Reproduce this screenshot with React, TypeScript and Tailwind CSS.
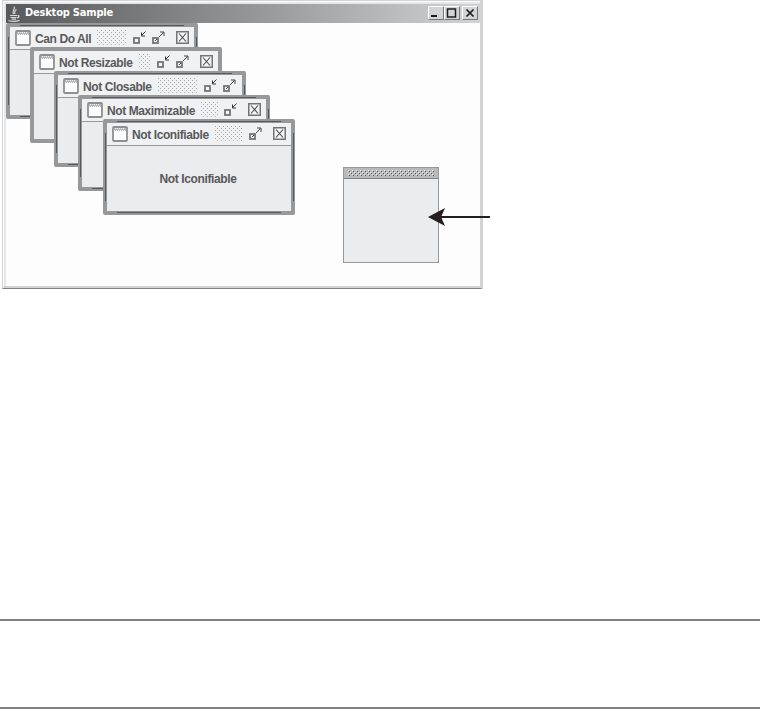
import type { ReactNode } from "react";

const font = "font-['Liberation_Sans',Arial,sans-serif]";

type Frame = {
  title: string;
  resizable?: boolean;
  closable?: boolean;
  maximizable?: boolean;
  iconifiable?: boolean;
};

const frames: Frame[] = [
  { title: "Can Do All", resizable: true, closable: true, maximizable: true, iconifiable: true },
  { title: "Not Resizable", closable: true, maximizable: true, iconifiable: true },
  { title: "Not Closable", resizable: true, maximizable: true, iconifiable: true },
  { title: "Not Maximizable", resizable: true, closable: true, iconifiable: true },
  { title: "Not Iconifiable", resizable: true, closable: true, maximizable: true },
];

const JavaCup = () => (
  <svg width="16" height="16" viewBox="0 0 16 16" fill="none" stroke="#d8d8d8" strokeWidth="1.200">
    <path d="M8 0.5C10 3 5.500 4 7.500 8M10.500 3.500C7.500 5 9.500 6 8.500 8" />
    <path d="M4 9.500h7M4.500 11.500h6M5.500 13.200h4.500M11.500 9.500c2.500 0 1.500 2-0.500 2.500" />
    <path d="M2.500 14.500c3 1 8 1 11-0.300" />
  </svg>
);

const FrameIcon = () => (
  <svg width="16" height="16" viewBox="0 0 16 16" className="shrink-0">
    <rect x="1" y="1" width="14" height="14" rx="1" fill="#fdfdfd" stroke="#8e8f92" strokeWidth="1.800" />
    <rect x="2" y="2" width="12" height="3" fill="#b5b6b8" />
    <path d="M3 2.500h10M2 4.500h11" stroke="#f4f4f4" strokeDasharray="1 1" />
  </svg>
);

const IconifyIcon = () => (
  <svg width="14" height="14" viewBox="0 0 14 14" className="shrink-0">
    <rect x="1" y="7" width="5" height="5" fill="#f4f4f4" stroke="#737477" strokeWidth="1.800" />
    <path d="M12.500 0.500L9 4M8.500 1.500v3.500h3.500" fill="none" stroke="#333" />
  </svg>
);

const MaximizeIcon = () => (
  <svg width="14" height="14" viewBox="0 0 14 14" className="shrink-0">
    <rect x="1" y="7" width="5" height="5" fill="#f4f4f4" stroke="#737477" strokeWidth="1.800" />
    <path d="M3 10L5 8M7 6L11.500 1.500M8 1h4v4" fill="none" stroke="#444" />
  </svg>
);

const CloseIcon = () => (
  <svg width="13" height="13" viewBox="0 0 13 13" className="shrink-0">
    <rect x="0.750" y="0.750" width="11.500" height="11.500" fill="#f4f4f4" stroke="#737477" strokeWidth="1.500" />
    <path d="M3 2.500l7 8M10 2.500l-7 8" stroke="#4a4a4c" strokeWidth="1.100" />
  </svg>
);

const Bumps = () => (
  <svg className="mx-1.5 h-4 w-0 flex-1">
    <defs>
      <pattern id="titleBumps" width="4" height="4" patternUnits="userSpaceOnUse">
        <path d="M0 0h1v1h-1zM2 2h1v1h-1z" fill="#a6a7a9" />
      </pattern>
    </defs>
    <rect width="100%" height="100%" fill="url(#titleBumps)" />
  </svg>
);

const InternalFrame = ({ frame, index }: { frame: Frame; index: number }) => (
  <div
    className="absolute w-48 h-24 rounded-[2px] bg-[#97989a] p-1"
    style={{ left: index * 24 + (index === 4 ? 1 : 0), top: index * 24 }}
  >
    {frame.resizable && (
      <>
        <div className="absolute left-3.5 right-3.5 top-0.5 h-px bg-[#58595b]" />
        <div className="absolute left-3.5 right-3.5 bottom-[2px] h-px bg-[#58595b]" />
        <div className="absolute top-3.5 bottom-3.5 left-0.5 w-px bg-[#58595b]" />
        <div className="absolute top-3.5 bottom-3.5 right-px w-px bg-[#58595b]" />
      </>
    )}
    <div className="flex h-full flex-col rounded-t-[2px] bg-[#ebecee]">
      <div className="flex h-[23px] items-center border-b border-[#97989a] bg-[#f0f1f2] pl-[5px] pr-[5px]">
        <FrameIcon />
        <span className="ml-1 whitespace-nowrap pt-px text-xs font-bold tracking-[-0.4px] text-[#58595b]">
          {frame.title}
        </span>
        <Bumps />
        <div className="flex items-center">
          {(frame.iconifiable || frame.maximizable) && (
            <div className="flex gap-[5px]">
              {frame.iconifiable && <IconifyIcon />}
              {frame.maximizable && <MaximizeIcon />}
            </div>
          )}
          {frame.closable && (
            <div className="ml-2.5 flex pb-0.5">
              <CloseIcon />
            </div>
          )}
        </div>
      </div>
      <div className="flex flex-1 items-center justify-center pr-0.5 text-xs font-bold tracking-[-0.38px] text-[#58595b]">
        {index === frames.length - 1 && frame.title}
      </div>
    </div>
  </div>
);

const WindowButton = ({ children }: { children: ReactNode }) => (
  <button className="h-[14px] w-4 border border-t-white border-l-white border-r-[#77787b] border-b-[#77787b] bg-[#d3d4d6]">
    <svg width="14" height="12" viewBox="0 0 14 12" fill="none" stroke="#1c1c1c">
      {children}
    </svg>
  </button>
);

const Palette = () => (
  <div className="absolute left-[337px] top-36 flex h-24 w-24 flex-col border border-[#97989a] bg-[#ebecee]">
    <div className="h-[11px] border-b border-[#808285] bg-[#b9babc] px-1 py-0.5">
      <svg width="86" height="6" className="block">
        <defs>
          <pattern id="bumps" width="4" height="4" patternUnits="userSpaceOnUse">
            <path d="M0 0h1v1h-1zM2 2h1v1h-1z" fill="#f4f4f4" />
            <path d="M1 1h1v1h-1zM3 3h1v1h-1z" fill="#58595b" />
          </pattern>
        </defs>
        <rect width="86" height="6" fill="url(#bumps)" />
      </svg>
    </div>
  </div>
);

export default function App() {
  return (
    <div className={`flex h-[709px] w-[760px] flex-col bg-white ${font}`}>
      <div className="relative ml-0.5 h-[289px] w-[481px] border-t border-r-[3px] border-b border-l border-t-[#d1d3d4] border-r-[#d1d3d4] border-b-[#808285] border-l-[#d1d3d4] bg-[#d1d3d4]">
        <div className="flex h-full flex-col border-t border-b-2 border-l border-t-white border-b-[#d1d3d4] border-l-white bg-[#e6e7e8] pl-0.5 pt-0.5">
          <div className="flex h-[19px] items-center bg-linear-to-r from-[#58595b] to-[#d1d3d4] pr-0.5">
            <JavaCup />
            <h1 className="ml-[3px] flex-1 font-['DejaVu_Sans_Condensed','DejaVu_Sans',sans-serif] text-[11px] font-bold tracking-[-0.2px] text-white">
              Desktop Sample
            </h1>
            <div className="flex pb-px">
              <WindowButton>
                <path d="M2 9h6" strokeWidth="2" />
              </WindowButton>
              <WindowButton>
                <path d="M2.500 2h8v8h-8zM2 2h9" strokeWidth="1.500" />
              </WindowButton>
              <div className="ml-0.5 flex">
                <WindowButton>
                  <path d="M3.500 2.500l7 7M10.500 2.500l-7 7" strokeWidth="1.700" />
                </WindowButton>
              </div>
            </div>
          </div>
          <div className="relative flex-1 bg-[#fdfdfd]">
            {frames.map((frame, i) => (
              <InternalFrame key={frame.title} frame={frame} index={i} />
            ))}
            <Palette />
          </div>
        </div>
        <svg width="62" height="20" viewBox="0 0 62 20" className="absolute left-[425px] top-[206px]" fill="#231f20">
          <path d="M0 10L17 1L13.500 9H62V11H13.500L17 19z" />
        </svg>
      </div>
      <div className="mt-[330px] h-0.5 bg-[#808080]" />
      <div className="mt-[86px] h-0.5 bg-[#808080]" />
    </div>
  );
}
